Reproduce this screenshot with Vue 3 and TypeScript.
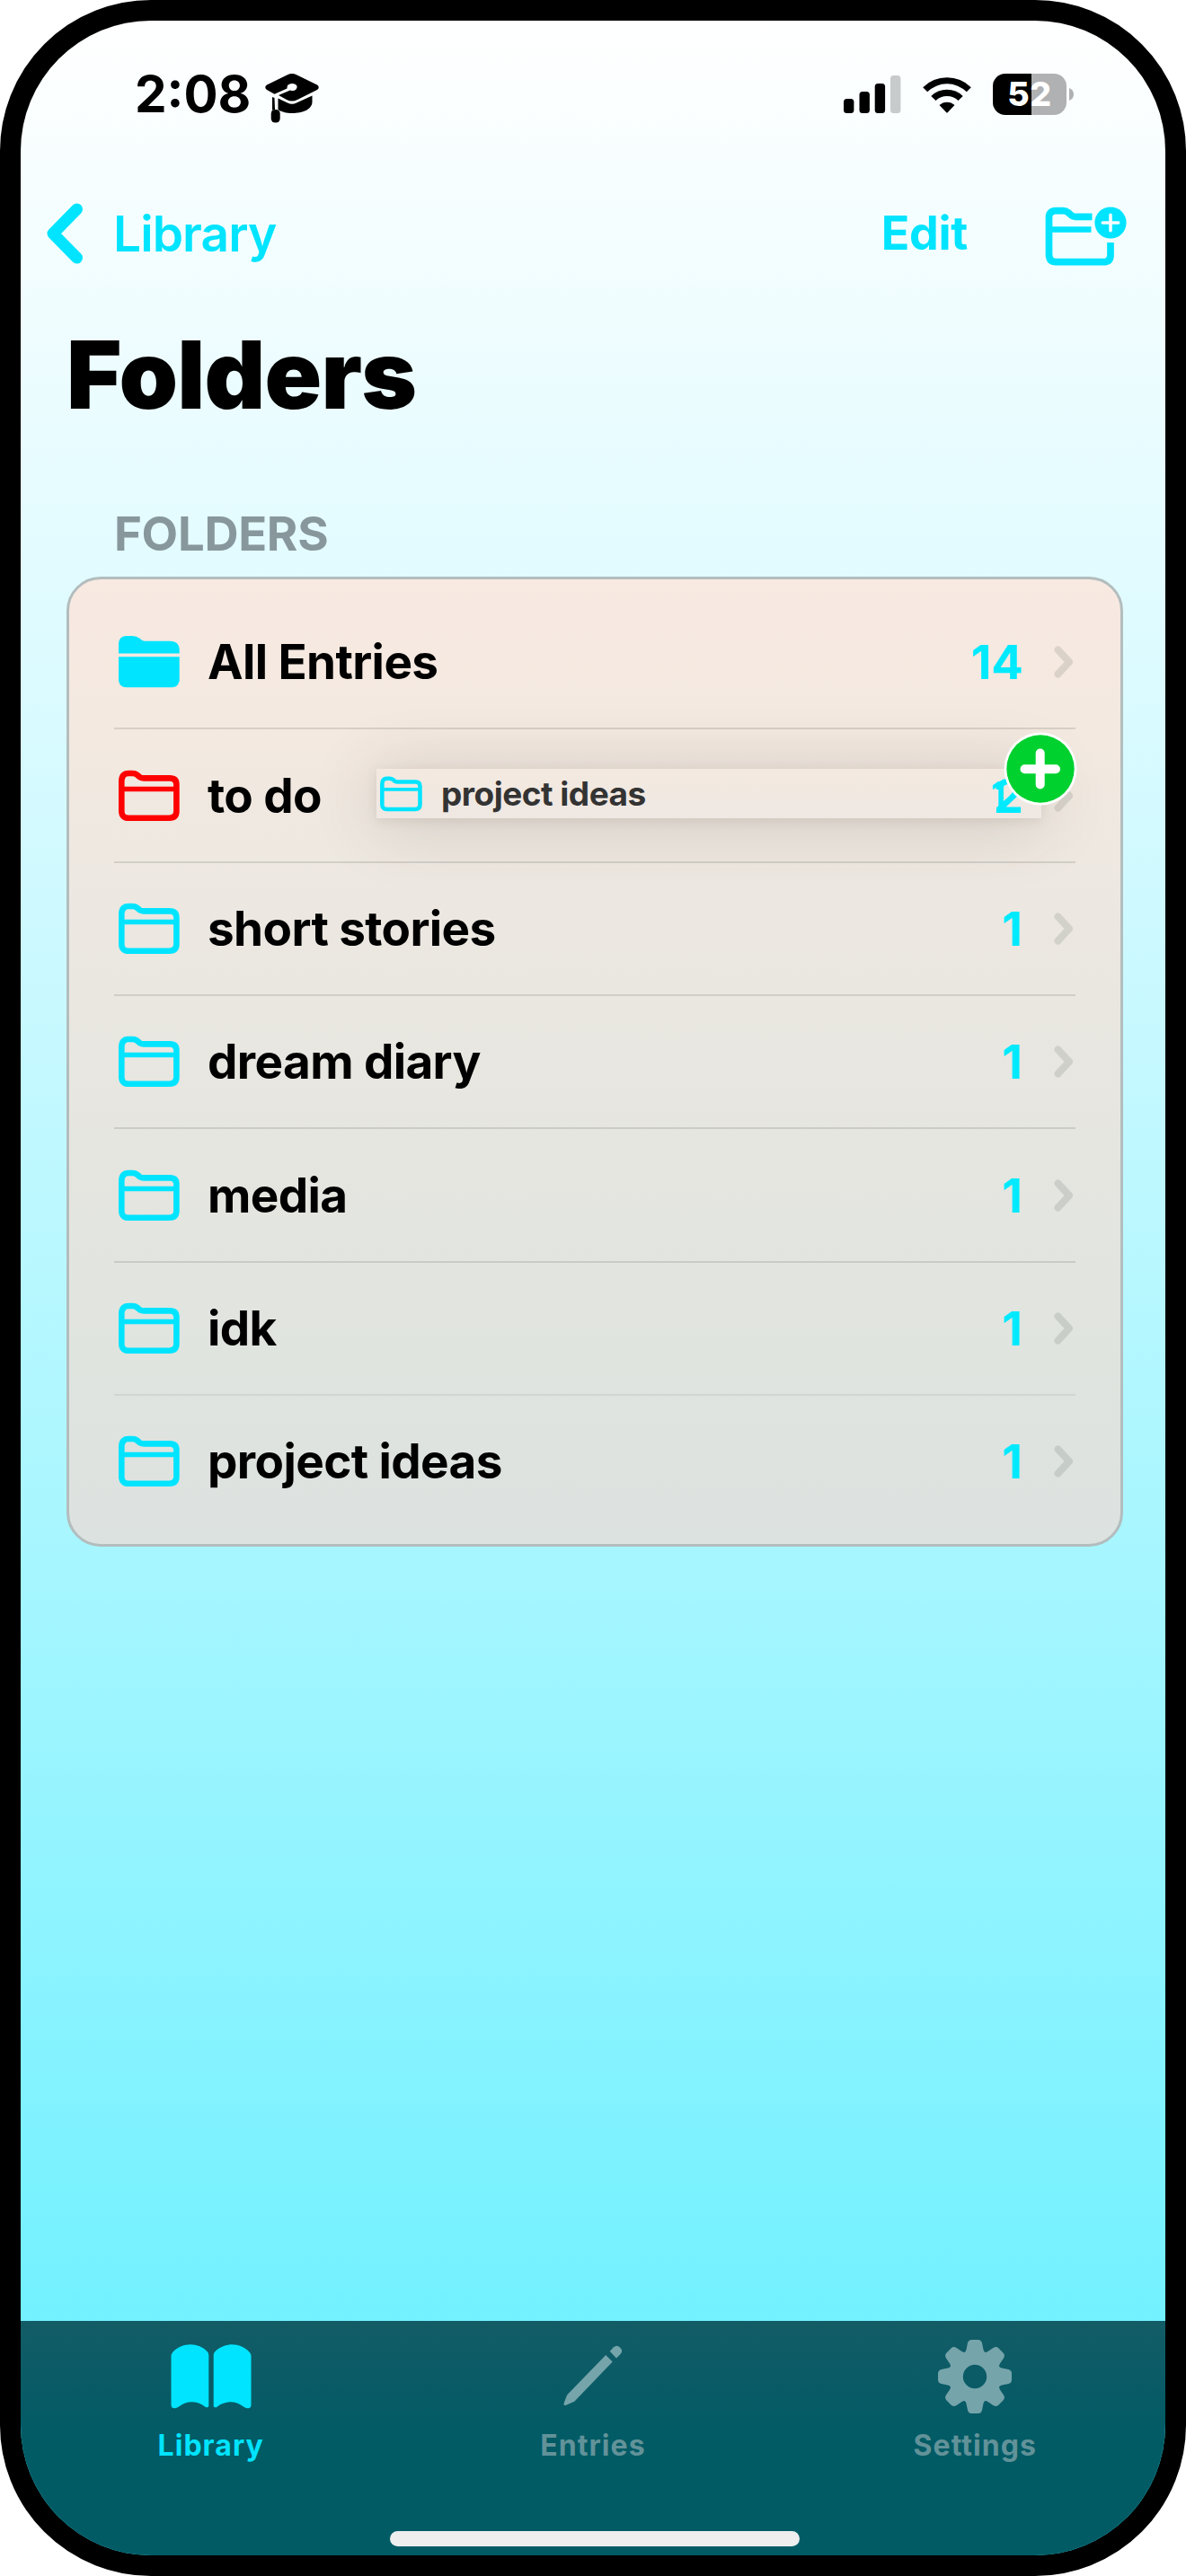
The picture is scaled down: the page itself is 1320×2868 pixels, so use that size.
<script setup lang="ts">
interface Folder {
  name: string
  count: number
  tint: string
  filled?: boolean
}

interface Tab {
  label: string
  icon: 'book' | 'pencil' | 'gear'
  active?: boolean
}

const folders: Folder[] = [
  { name: 'All Entries', count: 14, tint: 'cyan', filled: true },
  { name: 'to do', count: 2, tint: 'red' },
  { name: 'short stories', count: 1, tint: 'cyan' },
  { name: 'dream diary', count: 1, tint: 'cyan' },
  { name: 'media', count: 1, tint: 'cyan' },
  { name: 'idk', count: 1, tint: 'cyan' },
  { name: 'project ideas', count: 1, tint: 'cyan' },
]

const tabs: Tab[] = [
  { label: 'Library', icon: 'book', active: true },
  { label: 'Entries', icon: 'pencil' },
  { label: 'Settings', icon: 'gear' },
]

const gearAngles = [0, 45, 90, 135, 180, 225, 270, 315]
</script>

<template>
  <div class="phone">
    <div class="screen">
      <header class="status">
        <span class="time">2:08</span>
        <svg class="cap" width="60" height="58" viewBox="0 0 60 58">
          <path d="M2 13.5 L25 2.2 Q30 -0.2 35 2.2 L58 13.5 Q61.5 16 58 19 L36 30 Q30 33 24 30 L15 25 L28 19.5 Q32 21 34.5 18.5 Q37 15 34 13 Q29 10.800 25 14 Q24.500 16 24.500 17.500 L10.500 23.700 L2 19 Q-1.500 16 2 13.500 Z" />
          <path d="M14.500 28.500 L25 33.500 Q30 36 35 33.500 L52.500 25.500 V32 C52.500 41 42 45 30 45 C24 45 18 43.500 14.500 41 Z" />
          <path d="M8 27 L10.500 28 L11 41 Q9 41 8 42 Z" />
          <rect x="6.700" y="41" width="10" height="14.500" rx="4.500" />
        </svg>
        <span class="spacer"></span>
        <svg class="signal" width="64" height="42" viewBox="0 0 64 42">
          <rect x="0" y="26" width="11.400" height="16" rx="3.500" />
          <rect x="17.500" y="18" width="11.400" height="24" rx="3.500" />
          <rect x="34.700" y="9" width="11.400" height="33" rx="3.500" />
          <rect class="off" x="52" y="0" width="11.400" height="42" rx="3.500" />
        </svg>
        <svg class="wifi" width="56" height="42" viewBox="0 0 56 42">
          <path d="M1.200 13.300 A38 38 0 0 1 54.800 13.300 L49.800 18.300 A31 31 0 0 0 6.200 18.300 Z" />
          <path d="M10.300 23 A25 25 0 0 1 45.700 23 L40.500 28 A18 18 0 0 0 15.500 28 Z" />
          <path d="M19.500 33 A12.500 12.500 0 0 1 36.500 33 L28.700 41.200 Q28 41.800 27.300 41.200 Z" />
        </svg>
        <span class="battery">52</span>
        <svg class="nub" width="5" height="14" viewBox="0 0 5 14"><path d="M0 0 Q5 2 5 7 Q5 12 0 14 Z" /></svg>
      </header>

      <nav class="nav">
        <svg width="42" height="70" viewBox="0 0 42 70"><path d="M34.500 8 L8 35 L34.500 62" /></svg>
        <span class="back">Library</span>
        <span class="spacer"></span>
        <span class="edit">Edit</span>
        <svg class="new" width="92" height="68" viewBox="0 0 92 68">
          <path class="line" d="M52.500 13.300 H34 Q31 13.300 28.500 11 L26 8.700 Q23.500 6.700 20.500 6.700 H12 Q4.500 6.700 4.500 14.200 V55 Q4.500 63.700 12.500 63.700 H65 Q73 63.700 73 55.700 V42" />
          <path class="thin" d="M8 27.600 H51.500" />
          <circle cx="73" cy="20" r="17.600" />
          <path class="plus" d="M64.300 20 H81.700 M73 11.300 V28.700" />
        </svg>
      </nav>

      <h1 class="title">Folders</h1>
      <h2 class="section">FOLDERS</h2>

      <ul class="card">
        <li v-for="(f, i) in folders" :key="f.name" class="row" :class="{ faint: i === 5, last: i === 6 }">
          <svg class="folder" :class="f.tint" width="68" height="58" viewBox="0 0 68 58">
            <template v-if="f.filled">
              <path class="solid" d="M0 19.500 V9 Q0 0 9.500 0 H15 Q20 0 23.500 2.700 L26 4.800 Q27.500 5.700 29.500 5.700 H57 Q67.700 5.700 67.700 16 V19.500 Z" />
              <path class="solid" d="M0 23.300 H67.700 V50 Q66 57.300 59 57.300 H9 Q1.500 57.300 0 50 Z" />
            </template>
            <template v-else>
              <path d="M3.300 13 Q3.300 4 11 4 H15.500 Q18.500 4 20.500 5.600 L24 8.500 Q25.500 9.400 28 9.400 H57 Q64.400 9.400 64.400 16.500 V46 Q64.400 53.700 56.500 53.700 H11.300 Q3.300 53.700 3.300 46 Z" />
              <path class="thin" d="M5 21.500 H63" />
            </template>
          </svg>
          <span class="name">{{ f.name }}</span>
          <span class="count" :class="{ single: f.count === 1, above: f.count === 2 }">{{ f.count }}</span>
          <svg class="chev" width="22" height="36" viewBox="0 0 22 36"><path d="M4.500 4.500 L17 18 L4.500 31.500" /></svg>

          <div v-if="i === 1" class="drag">
            <svg class="folder cyan" width="47" height="40" viewBox="0 0 68 58">
              <path d="M3.300 13 Q3.300 4 11 4 H15.500 Q18.500 4 20.500 5.600 L24 8.500 Q25.500 9.400 28 9.400 H57 Q64.400 9.400 64.400 16.500 V46 Q64.400 53.700 56.500 53.700 H11.300 Q3.300 53.700 3.300 46 Z" />
              <path class="thin" d="M5 21.500 H63" />
            </svg>
            <span class="drag-name">project ideas</span>
            <span class="drag-count">1</span>
          </div>
          <svg v-if="i === 1" class="badge" width="82" height="82" viewBox="0 0 82 82">
            <circle cx="41" cy="41" r="40.500" fill="#fff" />
            <circle cx="41" cy="41" r="37.700" fill="#00d12f" />
            <path d="M23.500 41.300 H58 M40.700 23.500 V58.500" />
          </svg>
        </li>
      </ul>

      <footer class="tabbar">
        <div v-for="t in tabs" :key="t.label" class="tab" :class="[t.icon, { active: t.active }]">
          <svg v-if="t.icon === 'book'" width="90" height="84" viewBox="0 0 90 84">
            <path d="M0.500 19 Q0.500 17 2 15.300 C12 3.500 31 3.500 41 14.500 Q42.300 16 42.300 18 V75 Q41 77.300 38.500 75.700 C29 68.500 18 68.500 9 75.500 Q6.500 77.500 4 77.300 Q0.500 77 0.500 73.500 Z" />
            <path d="M89.500 19 Q89.500 17 88 15.300 C78 3.500 59 3.500 49 14.500 Q47.700 16 47.700 18 V75 Q49 77.300 51.500 75.700 C61 68.500 72 68.500 81 75.500 Q83.500 77.500 86 77.300 Q89.500 77 89.500 73.500 Z" />
          </svg>
          <svg v-else-if="t.icon === 'pencil'" width="66" height="84" viewBox="0 0 66 84">
            <path d="M47.200 18 L54.700 25.500 L13 69 Q12 70 10.500 70.600 L2.500 74 Q0 74.500 0.500 72 L3.500 64 Q4 62.500 5 61.500 Z" />
            <path d="M51.700 13.800 L56 9.300 Q59.500 6 63 9.500 Q67 13.500 63.500 17 L59 21.500 Z" />
          </svg>
          <svg v-else width="84" height="84" viewBox="0 0 84 84">
            <path fill-rule="evenodd" d="M42 12.500 A29.500 29.500 0 1 0 42 71.500 A29.500 29.500 0 1 0 42 12.500 Z M42 28.800 A13.200 13.200 0 1 1 42 55.200 A13.200 13.200 0 1 1 42 28.800 Z" />
            <path v-for="a in gearAngles" :key="a" :transform="`rotate(${a} 42 42)`" d="M29.500 17 Q32 14 32.500 12 L34 4.500 Q35 1 38.500 1 H45.500 Q49 1 50 4.500 L51.500 12 Q52 14 54.500 17 L42 20 Z" />
          </svg>
          <span class="tab-label">{{ t.label }}</span>
        </div>
        <div class="home"></div>
      </footer>
    </div>
  </div>
</template>

<style>
body {
  margin: 0;
  background: #fff;
}
</style>

<style scoped>
.phone {
  box-sizing: border-box;
  width: 1320px;
  height: 2868px;
  border: 23px solid #000;
  border-radius: 168px;
  background: #000;
  font-family: Inter, 'Liberation Sans', sans-serif;
}
.screen {
  height: 2822px;
  display: flex;
  flex-direction: column;
  overflow: hidden;
  border-radius: 145px;
  background: linear-gradient(180deg, #fff 0%, #e0fbff 23%, #a6f6ff 61%, #72f1ff 91%, #60efff 100%);
}
.spacer {
  flex: 1;
}

.status {
  display: flex;
  align-items: center;
  height: 163px;
  padding: 0 102px 0 127px;
}
.time {
  width: 131px;
  font-size: 56.5px;
  font-weight: 740;
  line-height: 60px;
}
.cap {
  margin: 10px 0 0 14px;
}
.signal .off {
  fill: #c8cbcc;
}
.wifi {
  margin-left: 23px;
}
.battery {
  width: 82px;
  height: 46px;
  margin-left: 23px;
  border-radius: 14px;
  background: linear-gradient(90deg, #000 0 43px, #afb1b3 43px);
  color: #fff;
  font-size: 37.5px;
  font-weight: 800;
  line-height: 46px;
  letter-spacing: 0.5px;
  text-align: center;
}
.nub {
  margin-left: 3px;
  fill: #afb1b3;
}

.nav {
  display: flex;
  align-items: center;
  height: 148px;
  padding: 0 42px 0 28px;
  color: #00e4ff;
}
.nav svg {
  fill: none;
  stroke: #00e4ff;
  stroke-width: 13;
  stroke-linecap: round;
  stroke-linejoin: round;
}
.nav svg.new {
  margin: 3px 0 0 86px;
}
.new .line {
  stroke-width: 7.7;
  stroke-linecap: butt;
}
.new .thin {
  stroke-width: 6.5;
  stroke-linecap: butt;
}
.nav .new circle {
  fill: #00e4ff;
  stroke: none;
}
.new .plus {
  stroke: #f6fdff;
  stroke-width: 3.6;
}
.back {
  margin-left: 33px;
  font-size: 55px;
  font-weight: 600;
  letter-spacing: -0.9px;
}
.edit {
  margin-top: -2px;
  font-size: 52px;
  font-weight: 700;
  letter-spacing: -0.3px;
}

.title {
  margin: 0;
  padding-left: 51px;
  font-size: 105px;
  font-weight: 900;
  line-height: 165px;
  letter-spacing: -0.8px;
}
.section {
  margin: 47px 0 0;
  padding-left: 104px;
  color: #87979b;
  font-size: 52.7px;
  font-weight: 650;
  line-height: 96px;
  letter-spacing: -0.3px;
}

.card {
  box-sizing: border-box;
  width: 1176px;
  height: 1080px;
  margin: 0 0 0 51px;
  padding: 19px 50px 17px;
  border: 3px solid #b3bdbe;
  border-radius: 38px;
  list-style: none;
  background: linear-gradient(180deg, #f8e9e1 0%, #f3e9e0 16%, #ede8e1 31%, #e0e4df 80%, #dce2e0 100%);
}
.row {
  position: relative;
  display: flex;
  align-items: center;
  box-sizing: border-box;
  height: 148.36px;
  border-bottom: 2px solid rgba(90, 90, 85, 0.18);
}
.row.faint {
  border-bottom-color: rgba(90, 90, 85, 0.1);
}
.row.last {
  border-bottom-color: transparent;
}
.folder {
  margin-left: 5px;
  fill: none;
  stroke: currentColor;
  stroke-width: 6.6;
}
.folder .thin {
  stroke-width: 5.6;
}
.folder .solid {
  fill: currentColor;
  stroke: none;
}
.cyan {
  color: #00e4ff;
}
.red {
  color: #f00;
}
.name {
  flex: 1;
  margin-left: 31px;
  font-size: 53px;
  font-weight: 660;
  letter-spacing: -0.6px;
}
.count {
  color: #00eaff;
  font-size: 52.7px;
  font-weight: 700;
}
.single {
  margin-right: 1px;
}
.above {
  position: relative;
  z-index: 2;
}
.chev {
  margin: 0 2px 0 34px;
  fill: none;
  stroke: rgba(60, 70, 65, 0.14);
  stroke-width: 8;
  stroke-linecap: round;
  stroke-linejoin: round;
}
.drag {
  position: absolute;
  left: 292px;
  top: 44px;
  z-index: 1;
  display: flex;
  align-items: center;
  box-sizing: border-box;
  width: 740px;
  height: 55px;
  background: linear-gradient(180deg, #f3e9e0, #efe8e3);
  box-shadow: 0 6px 76px rgba(70, 55, 50, 0.2), 0 3px 12px rgba(70, 55, 50, 0.1);
}
.drag .folder {
  margin-left: 4px;
}
.drag-name {
  flex: 1;
  margin-left: 21px;
  color: #333;
  font-size: 37px;
  font-weight: 650;
  letter-spacing: -0.5px;
}
.drag-count {
  margin-right: 40px;
  color: #00eaff;
  font-size: 37px;
  font-weight: 700;
}
.badge {
  position: absolute;
  left: 990px;
  top: 3px;
  z-index: 3;
}
.badge path {
  fill: none;
  stroke: #fff;
  stroke-width: 10;
  stroke-linecap: round;
}

.tabbar {
  position: relative;
  display: flex;
  height: 261.5px;
  margin-top: auto;
  background: linear-gradient(180deg, #135c66 0%, #0a5b66 25%, #005b65 55%);
}
.tab {
  flex: 1;
  display: flex;
  flex-direction: column;
  align-items: center;
  padding-top: 20px;
  color: #629299;
}
.tab.pencil {
  padding-left: 2px;
}
.tab.gear {
  padding-left: 2px;
}
.tab svg {
  fill: #76a4ab;
}
.tab.active {
  color: #00e4ff;
}
.tab.active svg {
  fill: #00e4ff;
}
.tab-label {
  margin-top: 15px;
  font-size: 32px;
  font-weight: 650;
  line-height: 40px;
  letter-spacing: 1.05px;
}
.home {
  position: absolute;
  left: 411px;
  bottom: 10px;
  width: 456px;
  height: 17px;
  border-radius: 9px;
  background: #eee;
}
</style>
